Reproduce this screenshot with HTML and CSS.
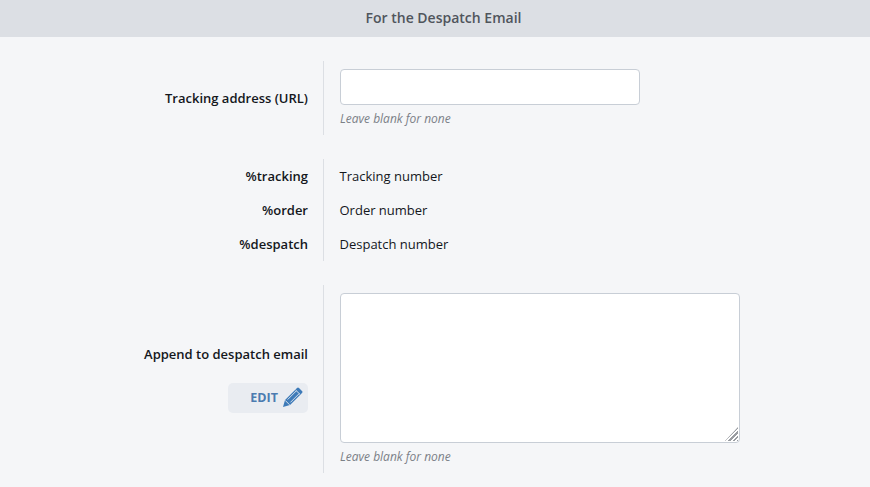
FILE: index.html
```html
<!DOCTYPE html>
<html lang="en">
<head>
<meta charset="utf-8">
<title>For the Despatch Email</title>
<link rel="stylesheet" href="styles.css">
</head>
<body>
<div class="header">For the Despatch Email</div>
<div class="form">
  <div class="group">
    <div class="labels center">
      <label class="label">Tracking address (URL)</label>
    </div>
    <div class="fields field-top">
      <input class="input" type="text">
      <div class="hint">Leave blank for none</div>
    </div>
  </div>
  <div class="group">
    <div class="legend">
      <div class="legend-row"><div class="labels"><span class="label">%tracking</span></div><div class="fields"><span>Tracking number</span></div></div>
      <div class="legend-row"><div class="labels"><span class="label">%order</span></div><div class="fields"><span>Order number</span></div></div>
      <div class="legend-row"><div class="labels"><span class="label">%despatch</span></div><div class="fields"><span>Despatch number</span></div></div>
    </div>
  </div>
  <div class="group">
    <div class="labels center stack">
      <label class="label">Append to despatch email</label>
      <button class="edit" type="button">EDIT
        <svg class="pencil" width="20" height="20" viewBox="0 0 20 20" aria-hidden="true">
          <path fill="#3d7ab8" d="M0 20 L2 13 L14 1 A1.4 1.4 0 0 1 16 1 L19 4 A1.4 1.4 0 0 1 19 6 L7 18 Z"/>
          <path fill="none" stroke="#e9ecf1" stroke-width="0.9" d="M4.6 12.6 L13.4 3.8 M7.4 15.4 L16.2 6.6 M12.6 3 L17 7.4 M2.2 13.4 L6.6 17.8"/>
        </svg>
      </button>
    </div>
    <div class="fields field-top">
      <div class="textarea-wrap">
        <textarea class="textarea"></textarea>
        <span class="grip"></span>
      </div>
      <div class="hint">Leave blank for none</div>
    </div>
  </div>
</div>
</body>
</html>
```
FILE: styles.css
```css
* { box-sizing: border-box; }
html, body { margin: 0; padding: 0; }
body {
  background: #f5f6f8;
  color: #14171c;
  font-family: "Open Sans", sans-serif;
  font-size: 13px;
  line-height: 18px;
  height: 487px;
  overflow: hidden;
}
.header {
  height: 37px;
  padding-left: 17px;
  background: #dcdfe4;
  color: #50555c;
  font-size: 14px;
  font-weight: 600;
  text-align: center;
  line-height: 36px;
}
.form {
  display: flex;
  flex-direction: column;
  gap: 24px;
  padding-top: 24px;
}
.group { display: flex; }
.labels {
  width: 324px;
  flex: none;
  padding-right: 15px;
  border-right: 1px solid #dcdfe4;
  text-align: right;
}
.center {
  display: flex;
  flex-direction: column;
  justify-content: center;
  align-items: flex-end;
}
.stack { gap: 20px; }
.label { font-weight: 600; }
.fields { padding-left: 16px; }
.field-top { padding-top: 8px; padding-bottom: 7px; }
.legend { display: flex; flex-direction: column; }
.legend-row { display: flex; height: 34px; align-items: stretch; }
.legend-row .labels { line-height: 34px; }
.legend-row .fields { line-height: 34px; padding-left: 15.5px; }
.input {
  display: block;
  width: 300px;
  height: 36px;
  background: #fff;
  border: 1px solid #c8ced6;
  border-radius: 4px;
  outline: 0;
}
.textarea-wrap { position: relative; width: 400px; height: 150px; }
.textarea {
  display: block;
  width: 400px;
  height: 150px;
  background: #fff;
  border: 1px solid #c8ced6;
  border-radius: 4px;
  outline: 0;
  margin: 0;
  resize: none;
}
.grip {
  position: absolute;
  right: 2px;
  bottom: 2px;
  width: 13px;
  height: 14px;
  background: repeating-linear-gradient(135deg, #999ca1 0, #999ca1 1.6px, #fff 1.6px, #fff 3px);
  clip-path: polygon(100% 0, 100% 100%, 0 100%);
}
.hint {
  margin-top: 5px;
  color: #7b8087;
  font-size: 12px;
  font-style: italic;
  line-height: 18px;
}
.edit {
  display: flex;
  align-items: center;
  justify-content: flex-end;
  gap: 5px;
  width: 80px;
  height: 30px;
  padding: 0 5px 2px 0;
  background: #e9ecf1;
  border: 0;
  border-radius: 5px;
  color: #4b7bb0;
  font-family: "Open Sans", sans-serif;
  font-size: 12.5px;
  font-weight: 700;
}
.pencil { display: block; flex: none; }
```
